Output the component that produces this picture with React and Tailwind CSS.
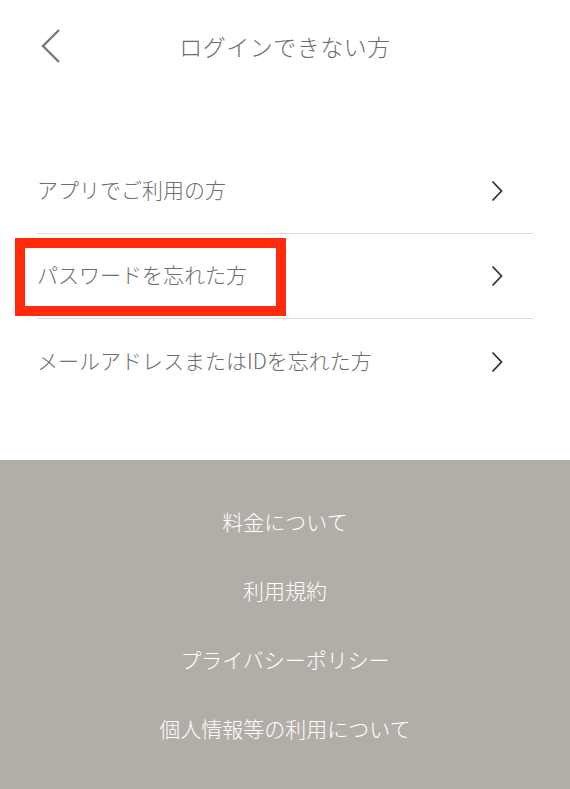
import React from "react";

const rows = ["アプリでご利用の方", "パスワードを忘れた方", "メールアドレスまたはIDを忘れた方"];
const links = ["料金について", "利用規約", "プライバシーポリシー", "個人情報等の利用について"];

function Chevron() {
  return (
    <svg width="12" height="22" viewBox="0 0 12 22" fill="none" className="shrink-0">
      <path d="M1.5 1.5 L10.5 11 L1.5 20.5" stroke="#333" strokeWidth="1.8" />
    </svg>
  );
}

export default function App() {
  return (
    <div
      className="w-[570px] h-[789px] overflow-hidden bg-white font-light"
      style={{ fontFamily: '"Noto Sans CJK JP", "Noto Sans", sans-serif' }}
    >
      <header className="relative h-[92px] flex items-center justify-center">
        <svg
          width="22"
          height="36"
          viewBox="0 0 22 36"
          fill="none"
          className="absolute left-[40px] top-[28px]"
        >
          <path d="M19 2 L3 18 L19 34" stroke="#7a7a7a" strokeWidth="2.4" />
        </svg>
        <h1 className="text-[23px] text-[#6c6c6c] tracking-[0.5px]">ログインできない方</h1>
      </header>

      <ul className="mx-[37px] mt-[57px] h-[311px]">
        {rows.map((label, i) => (
          <li
            key={label}
            className={
              "relative h-[85px] flex items-center justify-between pr-[30px] " +
              (i < rows.length - 1 ? "border-b border-[#dcdcdc]" : "")
            }
          >
            <span className="text-[21px] text-[#6e6e6e] -mt-[2px]">{label}</span>
            <Chevron />
            {i === 1 && (
              <span className="absolute left-[-22px] top-[4px] w-[271px] h-[78px] border-[10px] border-[#ff2a0a]" />
            )}
          </li>
        ))}
      </ul>

      <footer className="bg-[#b3ada7] pt-[27px] pb-10">
        {links.map((l) => (
          <div key={l} className="h-[69px] flex items-center justify-center text-[21px] text-white">
            {l}
          </div>
        ))}
      </footer>
    </div>
  );
}
